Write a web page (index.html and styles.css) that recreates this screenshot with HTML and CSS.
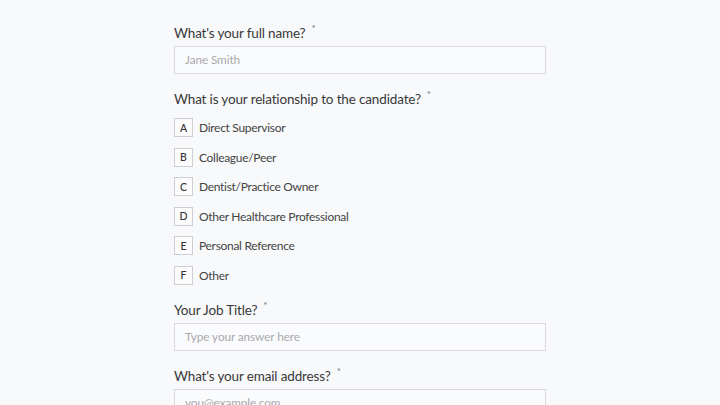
FILE: index.html
```html
<!DOCTYPE html>
<html lang="en">
<head>
<meta charset="utf-8">
<title>Reference Form</title>
<link rel="stylesheet" href="styles.css">
</head>
<body>
<main class="form">
  <section class="field">
    <label class="question">What's your full name?<span class="req">*</span></label>
    <div class="input placeholder">Jane Smith</div>
  </section>
  <section class="field">
    <div class="question">What is your relationship to the candidate?<span class="req">*</span></div>
    <ul class="options">
      <li class="option"><span class="key">A</span><span class="opt-text">Direct Supervisor</span></li>
      <li class="option"><span class="key">B</span><span class="opt-text">Colleague/Peer</span></li>
      <li class="option"><span class="key">C</span><span class="opt-text">Dentist/Practice Owner</span></li>
      <li class="option"><span class="key">D</span><span class="opt-text">Other Healthcare Professional</span></li>
      <li class="option"><span class="key">E</span><span class="opt-text">Personal Reference</span></li>
      <li class="option"><span class="key">F</span><span class="opt-text">Other</span></li>
    </ul>
  </section>
  <section class="field">
    <label class="question">Your Job Title?<span class="req">*</span></label>
    <div class="input placeholder">Type your answer here</div>
  </section>
  <section class="field">
    <label class="question">What's your email address?<span class="req">*</span></label>
    <div class="input placeholder">you@example.com</div>
  </section>
</main>
</body>
</html>
```
FILE: styles.css
```css
html, body {
  margin: 0;
  padding: 0;
  background: #f8f9fb;
  height: 100%;
  overflow: hidden;
}
body {
  font-family: Lato, "Liberation Sans", sans-serif;
  color: #3a3a3a;
}
.form {
  width: 372px;
  margin: 0 0 0 174px;
  padding-top: 23px;
  display: flex;
  flex-direction: column;
  gap: 15px;
}
.field {
  display: flex;
  flex-direction: column;
}
.question {
  font-size: 13.5px;
  letter-spacing: -0.15px;
  line-height: 20px;
  height: 20px;
  color: #383838;
}
.req {
  font-size: 10px;
  color: #777;
  margin-left: 6px;
  position: relative;
  top: -6px;
}
.input {
  margin-top: 3px;
  height: 28px;
  box-sizing: border-box;
  border: 1px solid #d9d9dc;
  background: #fafbfc;
  padding: 0 10px;
  font-size: 11.8px;
  letter-spacing: -0.1px;
  line-height: 26px;
}
.placeholder {
  color: #a9a9ad;
}
.options {
  list-style: none;
  margin: 9px 0 0 0;
  padding: 0;
  display: flex;
  flex-direction: column;
  gap: 10.6px;
}
.option {
  display: flex;
  align-items: center;
  height: 19px;
  gap: 6px;
}
.key {
  width: 19px;
  height: 19px;
  box-sizing: border-box;
  border: 1px solid #cfcfd3;
  background: #fcfcfd;
  display: flex;
  align-items: center;
  justify-content: center;
  font-size: 10.5px;
  font-weight: 500;
  color: #333;
}
.opt-text {
  font-size: 12px;
  letter-spacing: -0.3px;
  color: #444;
}
```
